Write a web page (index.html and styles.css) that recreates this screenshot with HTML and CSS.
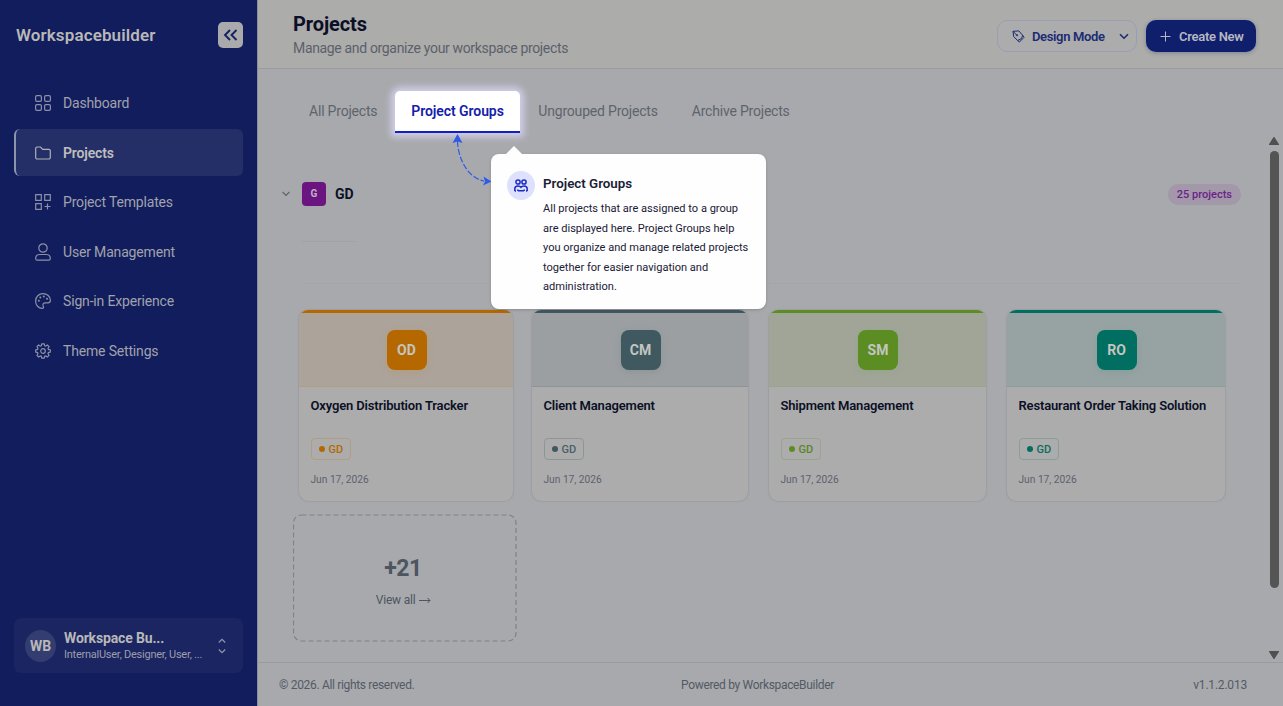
FILE: index.html
```
<!DOCTYPE html>
<html lang="en">
<head>
    <meta charset="UTF-8">
    <meta name="viewport" content="width=device-width, initial-scale=1.0">
    <title>Projects - Workspacebuilder</title>
    <link rel="stylesheet" href="styles.css">
</head>
<body>
    <aside class="sidebar">
        <div class="brand">
            <span class="brand-name">Workspacebuilder</span>
            <button class="collapse">
                <svg width="16" height="14" viewBox="0 0 16 14"><path d="M7 2 2 7l5 5M13.500 2l-5 5 5 5"/></svg>
            </button>
        </div>
        <nav class="nav">
            <a class="nav-item">
                <svg width="16" height="16" viewBox="0 0 16 16"><rect x=".6" y=".6" width="5.800" height="5.800" rx="1.300"/><rect x="9.600" y=".6" width="5.800" height="5.800" rx="1.300"/><rect x=".6" y="9.600" width="5.800" height="5.800" rx="1.300"/><rect x="9.600" y="9.600" width="5.800" height="5.800" rx="1.300"/></svg>
                <span>Dashboard</span>
            </a>
            <a class="nav-item active">
                <svg width="16" height="16" viewBox="0 0 16 16"><path d="M.7 12.500v-9A1.500 1.500 0 0 1 2.200 2h3.300l2.200 2.300h6.100a1.500 1.500 0 0 1 1.500 1.500v6.700a1.500 1.500 0 0 1-1.500 1.500H2.200a1.500 1.500 0 0 1-1.500-1.500z"/></svg>
                <span>Projects</span>
            </a>
            <a class="nav-item">
                <svg width="16" height="16" viewBox="0 0 16 16"><path d="M.7.7h5.600v5.600H.7zM9.700.7h5.600v5.600H9.700zM.7 9.700h5.600v5.600H.7zM12.500 9.500v6M9.500 12.500h6"/></svg>
                <span>Project Templates</span>
            </a>
            <a class="nav-item">
                <svg width="16" height="18" viewBox="0 0 16 18"><circle cx="8" cy="5" r="4.200"/><path d="M.7 15.500c0-2.500 1.500-4 4-4h6.600c2.500 0 4 1.500 4 4 0 1.200-.5 1.700-1.500 1.700H2.200c-1 0-1.500-.5-1.500-1.700z"/></svg>
                <span>User Management</span>
            </a>
            <a class="nav-item">
                <svg width="16" height="16" viewBox="0 0 16 16"><path d="M8 .6C3.800.6.6 3.800.6 8s3 7.400 6.600 7.400c1.600 0 1.500-1.300 1-2.400-.7-1.700.1-3.200 2-3.200h2.500c1.800 0 2.700-.9 2.700-2.600C15.400 3.400 12 .6 8 .6z"/><g class="dots"><circle cx="3.800" cy="7.800" r="1"/><circle cx="5.300" cy="4.500" r="1"/><circle cx="8.800" cy="3.500" r="1"/><circle cx="12" cy="5.700" r="1"/></g></svg>
                <span>Sign-in Experience</span>
            </a>
            <a class="nav-item">
                <svg width="16" height="16" viewBox="0 0 16 16"><circle cx="8" cy="8" r="2.300"/><path d="M6.800.8h2.400l.5 1.900 1 .4 1.700-1 1.600 1.600-1 1.700.4 1 1.900.5v2.200l-1.900.5-.4 1 1 1.700-1.600 1.600-1.700-1-1 .4-.5 1.900H6.800l-.5-1.900-1-.4-1.700 1L2 12.300l1-1.700-.4-1-1.900-.5V6.900l1.900-.5.4-1-1-1.700 1.600-1.600 1.700 1 1-.4z"/></svg>
                <span>Theme Settings</span>
            </a>
        </nav>
        <div class="account">
            <div class="avatar">WB</div>
            <div class="account-text">
                <div class="account-name">Workspace Bu...</div>
                <div class="account-roles">InternalUser, Designer, User, ...</div>
            </div>
            <svg width="8" height="16" viewBox="0 0 8 16"><path d="M.8 4.500 4 1.300l3.200 3.200M.8 11.500 4 14.700l3.200-3.200"/></svg>
        </div>
    </aside>

    <main class="main">
        <header class="topbar">
            <div>
                <h1>Projects</h1>
                <p class="subtitle">Manage and organize your workspace projects</p>
            </div>
            <div class="actions">
                <button class="btn btn-outline">
                    <svg class="pen" width="13" height="13" viewBox="0 0 13 13"><path d="M1 1.300 6.800.9l3.800 4.300-1 3.400-4 1.900L1.700 6.600zM1 1.300l3.400 3.500M5.600 10.500l1.700 1.600 4.700-4.700-1.400-2.200"/><circle cx="5" cy="5.200" r=".7"/></svg>
                    <span class="mode">Design Mode</span>
                    <svg class="caret" width="10" height="7" viewBox="0 0 10 7"><path d="M1 1.200l4 4 4-4"/></svg>
                </button>
                <button class="btn btn-primary">
                    <svg width="11" height="11" viewBox="0 0 11 11"><path d="M5.500.5v10M.5 5.500h10"/></svg>
                    <span>Create New</span>
                </button>
            </div>
        </header>

        <section class="content">
            <div class="tabs">
                <a class="tab">All Projects</a>
                <a class="tab tab-active">Project Groups</a>
                <a class="tab">Ungrouped Projects</a>
                <a class="tab">Archive Projects</a>
            </div>

            <div class="group-head">
                <svg width="8" height="6" viewBox="0 0 8 6"><path d="M.6 1 4 4.400 7.400 1"/></svg>
                <span class="group-icon">G</span>
                <span class="group-name">GD</span>
                <span class="group-count">25 projects</span>
            </div>
            <div class="group-info"><div class="group-line"></div></div>

            <div class="cards">
                <article class="card orange">
                    <div class="card-top"><span class="badge">OD</span></div>
                    <div class="card-body">
                        <h3>Oxygen Distribution Tracker</h3>
                        <span class="tag">GD</span>
                        <p class="date">Jun 17, 2026</p>
                    </div>
                </article>
                <article class="card slate">
                    <div class="card-top"><span class="badge">CM</span></div>
                    <div class="card-body">
                        <h3>Client Management</h3>
                        <span class="tag">GD</span>
                        <p class="date">Jun 17, 2026</p>
                    </div>
                </article>
                <article class="card green">
                    <div class="card-top"><span class="badge">SM</span></div>
                    <div class="card-body">
                        <h3>Shipment Management</h3>
                        <span class="tag">GD</span>
                        <p class="date">Jun 17, 2026</p>
                    </div>
                </article>
                <article class="card teal">
                    <div class="card-top"><span class="badge">RO</span></div>
                    <div class="card-body">
                        <h3>Restaurant Order Taking Solution</h3>
                        <span class="tag">GD</span>
                        <p class="date">Jun 17, 2026</p>
                    </div>
                </article>
            </div>

            <a class="view-all">
                <svg class="dash" width="224" height="128"><rect x=".5" y="1" width="222.500" height="126" rx="8"/></svg>
                <span class="more">+21</span>
                <span class="more-link">View all <svg width="12" height="7" viewBox="0 0 12 7"><path d="M0 3.500h11M8.500 1 11 3.500 8.500 6"/></svg></span>
            </a>

            <div class="scrollbar">
                <svg width="10" height="8" viewBox="0 0 10 8"><path d="M5 .5 9.500 7.500H.5z"/></svg>
                <div class="thumb"></div>
                <svg class="down" width="10" height="8" viewBox="0 0 10 8"><path d="M5 7.500.5.5h9z"/></svg>
            </div>

            <svg class="connector" width="44" height="56" viewBox="0 0 44 56">
                <path class="line" d="M9.500 7C10 25 20 44 36 47"/>
                <path class="head" d="M9.500 0 14.500 9 9.500 7.500 4.500 9zM43.500 47.500l-8.500 4 2-4-1.500-5z"/>
            </svg>

            <div class="popover">
                <span class="popover-icon">
                    <svg width="14" height="13" viewBox="0 0 14 13"><circle cx="4" cy="3" r="2.100"/><circle cx="10" cy="3" r="2.100"/><path d="M.8 12V9.800C.8 8 2 7 4 7c1.300 0 2.300.4 3 1.300C7.700 7.400 8.700 7 10 7c2 0 3.200 1 3.200 2.800V12M3.800 12v-1.500M10.200 12v-1.500M4 11.800h6M.8 12H2M12 12h1.200"/></svg>
                </span>
                <div>
                    <h2>Project Groups</h2>
                    <p>All projects that are assigned to a group<br>are displayed here. Project Groups help<br>you organize and manage related projects<br>together for easier navigation and<br>administration.</p>
                </div>
            </div>
        </section>

        <footer class="footer">
            <span>© 2026. All rights reserved.</span>
            <span class="powered">Powered by WorkspaceBuilder</span>
            <span class="version">v1.1.2.013</span>
        </footer>
    </main>
</body>
</html>
```

FILE: styles.css
```
* {
    box-sizing: border-box;
}
body {
    margin: 0;
    width: 1283px;
    height: 706px;
    display: flex;
    overflow: hidden;
    font-family: Roboto, "Liberation Sans", sans-serif;
    font-size: 14px;
    background-color: #a8a9ac;
    color: #0b1026;
}
h1, h2, h3, p {
    margin: 0;
}
button {
    font-family: inherit;
    border: none;
    padding: 0;
}
svg {
    fill: none;
    stroke: currentColor;
    stroke-width: 1.2;
    flex-shrink: 0;
}

/* Sidebar */
.sidebar {
    width: 258px;
    flex-shrink: 0;
    display: flex;
    flex-direction: column;
    padding: 0 14px 33px 14px;
    background-color: #111d5c;
    border-right: 1px solid #8c8d9c;
    color: #b9b8b8;
}
.brand {
    height: 70px;
    display: flex;
    align-items: center;
    justify-content: space-between;
    padding-left: 2px;
}
.brand-name {
    font-size: 17px;
    font-weight: 600;
    letter-spacing: 0.12px;
}
.collapse {
    width: 25px;
    height: 26px;
    display: flex;
    align-items: center;
    justify-content: center;
    border-radius: 5px;
    background-color: #aaaaac;
    color: #17225f;
}
.collapse svg {
    stroke-width: 1.9;
}
.nav {
    margin-top: 9.7px;
    display: flex;
    flex-direction: column;
    gap: 2.5px;
}
.nav-item {
    height: 47px;
    display: flex;
    align-items: center;
    gap: 12px;
    padding-left: 21px;
    color: #a1a2ad;
    letter-spacing: -0.17px;
}
.nav-item svg {
    color: #8d90a6;
}
.nav-item .dots {
    fill: currentColor;
    stroke: none;
}
.nav-item.active {
    border-radius: 6px;
    border-left: 2px solid #8f94ad;
    padding-left: 19px;
    background-color: #242f67;
    color: #bfbebd;
    font-weight: 600;
}
.nav-item.active svg {
    color: #b0b0b8;
}
.account {
    margin-top: auto;
    height: 55px;
    display: flex;
    align-items: center;
    padding: 0 17px 0 11px;
    border-radius: 7px;
    background-color: #1a2561;
}
.avatar {
    width: 31px;
    height: 32px;
    display: flex;
    align-items: center;
    justify-content: center;
    border-radius: 50%;
    background-color: #343d70;
    font-weight: 700;
}
.account-text {
    flex: 1;
    margin-left: 8px;
    white-space: nowrap;
}
.account-name {
    font-weight: 700;
    letter-spacing: -0.15px;
    line-height: 17px;
}
.account-roles {
    font-size: 11px;
    letter-spacing: -0.25px;
    line-height: 15px;
    color: #9c9eab;
}
.account svg {
    color: #9295aa;
}

/* Header */
.main {
    flex: 1;
    display: flex;
    flex-direction: column;
}
.topbar {
    height: 69px;
    display: flex;
    align-items: center;
    justify-content: space-between;
    padding: 3px 27px 0 35px;
    background-color: #acacaa;
    border-bottom: 1px solid #9a9ca2;
}
h1 {
    font-size: 20px;
    font-weight: 700;
    letter-spacing: -0.1px;
    line-height: 24px;
}
.subtitle {
    letter-spacing: -0.34px;
    line-height: 24px;
    color: #5b616a;
}
.actions {
    display: flex;
    gap: 9px;
    margin-top: 1px;
}
.btn {
    height: 32px;
    display: flex;
    align-items: center;
    border-radius: 10px;
    font-size: 13px;
    font-weight: 600;
    letter-spacing: -0.28px;
}
.btn-outline {
    width: 140px;
    padding: 0 7px 0 14px;
    gap: 7px;
    border: 1px solid #9a9eb3;
    background-color: #acacad;
    color: #1b2b73;
}
.mode {
    letter-spacing: -0.35px;
}
.pen {
    stroke-width: 1;
}
.caret {
    margin-left: auto;
    stroke-width: 1.6;
}
.btn-primary {
    width: 110px;
    padding-left: 14px;
    gap: 8px;
    background-color: #0f1f6c;
    color: #b6b8c2;
    box-shadow: 0 1px 4px rgba(15, 31, 108, 0.3);
}
.btn-primary svg {
    stroke-width: 1;
}

/* Content */
.content {
    flex: 1;
    position: relative;
    padding: 22px 26px 0 28px;
}
.tabs {
    height: 42px;
    display: flex;
    padding-left: 6px;
}
.tab {
    padding: 0 17px;
    letter-spacing: -0.2px;
    line-height: 40px;
    color: #5e646d;
}
.tab-active {
    width: 125px;
    margin: 0 1px;
    padding: 0 16px;
    border-radius: 5px 5px 0 0;
    border-bottom: 2px solid #101fc0;
    background-color: #fff;
    color: #1420ab;
    font-weight: 600;
    letter-spacing: -0.08px;
    white-space: nowrap;
    box-shadow: 0 0 7px 4px rgba(216, 213, 246, 0.85);
}
.group-head {
    height: 24px;
    margin-top: 49px;
    padding-right: 16px;
    display: flex;
    align-items: center;
}
.group-head > svg {
    margin: 0 12px 0 -4px;
    color: #5f646e;
}
.group-icon {
    width: 24px;
    height: 24px;
    border-radius: 4px;
    background-color: #6b1580;
    color: #c4b0c9;
    font-size: 10px;
    font-weight: 700;
    line-height: 24px;
    text-align: center;
}
.group-name {
    margin-left: 9px;
    font-weight: 700;
}
.group-count {
    margin-left: auto;
    padding: 0 9px;
    border-radius: 11px;
    background-color: #a397aa;
    color: #6a2387;
    font-size: 11px;
    font-weight: 500;
    line-height: 21px;
}
.group-info {
    height: 78px;
    margin: 0 16px;
    padding-top: 35px;
    border-bottom: 1px solid #a5a5a9;
}
.group-line {
    width: 54px;
    height: 1px;
    background-color: #a1a1aa;
}

/* Project cards */
.cards {
    margin-top: 26px;
    padding-left: 13px;
    display: grid;
    grid-template-columns: 233px 237px 238px 218px;
}
.card {
    height: 191px;
    margin-right: 21px;
    overflow: hidden;
    border-radius: 9px;
    background-color: #acacac;
    box-shadow: 0 0 2px rgba(70, 75, 100, 0.35);
}
.card:first-child {
    margin-right: 19px;
}
.card:last-child {
    margin-right: 0;
}
.card-top {
    height: 77px;
    display: flex;
    align-items: center;
    justify-content: center;
    border-top: 3px solid var(--main);
    border-bottom: 1px solid var(--edge);
    background-color: var(--soft);
}
.badge {
    width: 40px;
    height: 40px;
    margin: 1px 0 0 1px;
    border-radius: 8px;
    background-color: var(--main);
    box-shadow: 0 2px 6px var(--edge);
    color: #c3c5c0;
    font-weight: 700;
    line-height: 40px;
    text-align: center;
}
.card-body {
    padding: 10px 11.5px;
}
.card h3 {
    height: 41px;
    font-size: 13px;
    font-weight: 600;
    letter-spacing: -0.16px;
    line-height: 17px;
    white-space: nowrap;
}
.tag {
    height: 22px;
    display: inline-flex;
    align-items: center;
    gap: 4px;
    padding: 0 7px;
    border: 1px solid var(--edge);
    border-radius: 4px;
    color: var(--text);
    font-size: 11px;
    font-weight: 500;
}
.tag::before {
    content: "";
    width: 6px;
    height: 6px;
    border-radius: 50%;
    background-color: var(--main);
}
.date {
    margin-top: 12px;
    font-size: 10.2px;
    line-height: 16px;
    color: #5c616c;
}
.orange { --main: #b66800; --text: #b66800; --soft: #aca39a; --edge: #b39d80; }
.slate { --main: #405860; --text: #4a5e68; --soft: #9b9fa1; --edge: #8e9598; }
.green { --main: #5b8d22; --text: #598526; --soft: #a0a598; --edge: #98a48b; }
.teal { --main: #006e60; --text: #0a6b5f; --soft: #96a3a2; --edge: #879e9b; }

.view-all {
    position: relative;
    width: 224px;
    height: 128px;
    margin: 13px 0 0 7px;
    display: flex;
    flex-direction: column;
    align-items: center;
    color: #4d5560;
}
.dash {
    position: absolute;
    top: 0;
    left: 0;
    color: #7e828b;
    stroke-dasharray: 5 3;
}
.more {
    margin-top: 40px;
    margin-right: 4px;
    font-size: 23px;
    font-weight: 700;
    letter-spacing: -0.5px;
    line-height: 30px;
}
.more-link {
    margin-top: 8px;
    margin-right: 3px;
    font-size: 12px;
    letter-spacing: -0.2px;
    line-height: 16px;
}
.more-link svg {
    margin-left: 1px;
    stroke-width: 1;
}

.scrollbar {
    position: absolute;
    top: 68px;
    right: 4px;
    bottom: 3px;
    width: 10px;
    display: flex;
    flex-direction: column;
    color: #505050;
}
.scrollbar svg {
    fill: currentColor;
    stroke-linejoin: round;
}
.thumb {
    width: 9px;
    height: 437px;
    margin: 6px 0 0 1px;
    border-radius: 5px;
    background-color: #545454;
}
.scrollbar .down {
    margin-top: auto;
}

/* Tour popover */
.connector {
    position: absolute;
    top: 65px;
    left: 190px;
    color: #2e5be8;
}
.connector .line {
    stroke-dasharray: 6 2;
}
.connector .head {
    fill: currentColor;
    stroke: none;
}
.popover {
    position: absolute;
    top: 85px;
    left: 233px;
    width: 275px;
    height: 155px;
    display: flex;
    gap: 8px;
    padding: 17px 10px 0 16px;
    border-radius: 8px;
    background-color: #fefefe;
    color: #1a2036;
    box-shadow: 0 1px 3px rgba(50, 50, 60, 0.25);
}
.popover::before {
    content: "";
    position: absolute;
    top: -8px;
    left: 15px;
    border: 8px solid transparent;
    border-top: 0;
    border-bottom-color: #fefefe;
}
.popover-icon {
    width: 28px;
    height: 29px;
    flex-shrink: 0;
    display: flex;
    align-items: center;
    justify-content: center;
    border-radius: 50%;
    background-color: #dde1fb;
    color: #1b2bc4;
}
.popover-icon svg {
    stroke-width: 1.5;
}
.popover h2 {
    margin-bottom: 3px;
    font-size: 13.35px;
    font-weight: 600;
    line-height: 25px;
}
.popover p {
    font-size: 11.05px;
    line-height: 19.5px;
    white-space: nowrap;
}

/* Footer */
.footer {
    height: 44px;
    display: grid;
    grid-template-columns: 1fr auto 1fr;
    align-items: center;
    padding: 0 36px 0 21px;
    border-top: 1px solid #989a9e;
    color: #535a66;
    font-size: 12px;
    letter-spacing: -0.33px;
}
.powered {
    padding-right: 11px;
}
.version {
    text-align: right;
    letter-spacing: -0.2px;
}
```
